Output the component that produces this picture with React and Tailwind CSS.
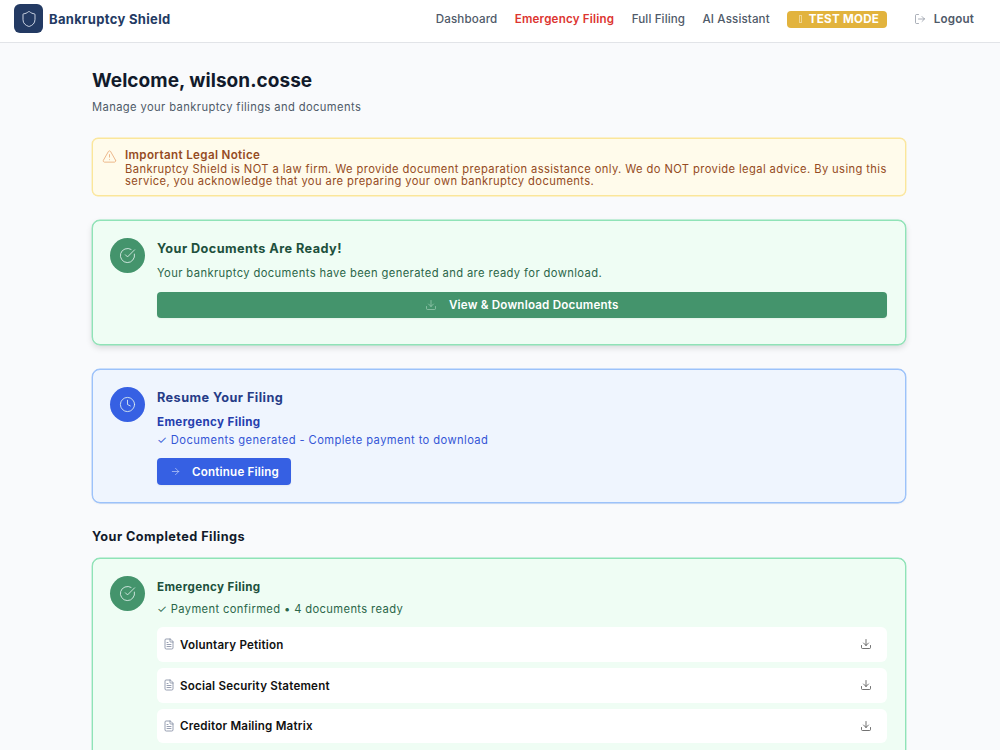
import React from 'react';
import {
  Shield,
  LogOut,
  TriangleAlert,
  CircleCheckBig,
  Clock,
  ArrowRight,
  Download,
  FileText,
} from 'lucide-react';

const navItems = [
  { label: 'Dashboard' },
  { label: 'Emergency Filing', urgent: true },
  { label: 'Full Filing' },
  { label: 'AI Assistant' },
];

const documents = [
  'Voluntary Petition',
  'Social Security Statement',
  'Creditor Mailing Matrix',
];

const Header = () => (
  <header className="h-[43px] bg-white border-b border-[#e2e4e8] flex items-start justify-between pl-[14px] pr-[26px]">
    <div className="flex items-center pt-1">
      <div className="w-[29px] h-[29px] rounded-md bg-[#233a63] flex items-center justify-center">
        <Shield className="w-[18px] h-[18px] text-[#dbe2ee]" strokeWidth={1.2} />
      </div>
      <span className="ml-1.5 text-[13px] leading-5 font-bold tracking-[0.33px] text-[#233a63]">Bankruptcy Shield</span>
    </div>

    <nav className="flex items-center h-[38px] text-[11.6px] tracking-[0.2px] text-[#4f5a69]">
      {navItems.map((item) => (
        <a
          key={item.label}
          href="#"
          className={`mr-[17.4px] whitespace-nowrap ${item.urgent ? 'font-semibold text-[#dc3530]' : 'font-medium tracking-[0.12px]'}`}
        >
          {item.label}
        </a>
      ))}
      <span className="w-[100px] h-[17px] mr-[0.5px] rounded bg-[#e2b33d] text-white font-bold tracking-[0.27px] flex items-center justify-end pr-2 whitespace-nowrap">
        <span className="w-[3px] h-2 border border-[#f0d58f] mr-[7px]" />
        TEST MODE
      </span>
      <button className="ml-[26px] flex items-center font-semibold">
        <LogOut className="w-[12px] h-[12px] mr-[8px] text-[#7c8491]" strokeWidth={1.3} />
        Logout
      </button>
    </nav>
  </header>
);

const CardIcon = ({ icon: Icon, color }) => (
  <div className={`w-[35px] h-[35px] shrink-0 rounded-full flex items-center justify-center ${color}`}>
    <Icon className="w-[17px] h-[17px] text-[#e3f1ee]" strokeWidth={1.2} />
  </div>
);

const App = () => {
  return (
    <div className="h-[750px] overflow-hidden bg-[#f9fafc] font-['Inter',sans-serif] text-[11.2px] leading-3 tracking-[0.39px]">
      <Header />

      <main className="w-[813.5px] ml-[92px] pt-[26px]">
        <h1 className="text-[19px] leading-[23px] font-bold tracking-[0.04px] text-[#121a2b]">Welcome, wilson.cosse</h1>
        <p className="mt-2 leading-[14px] text-[#4f5a69]">Manage your bankruptcy filings and documents</p>

        {/* Legal notice */}
        <div className="mt-6 h-[58px] flex border border-[#fbe69a] rounded-md bg-[#fffbeb] pt-[10px] pl-[9px] text-[#954b23] shadow-[0_0_0_0.4px_#fbe69a]">
          <TriangleAlert className="w-[15px] h-[15px] shrink-0 text-[#e6a26c]" strokeWidth={1.2} />
          <div className="ml-[8px] whitespace-nowrap">
            <h2 className="text-[11.6px] font-semibold leading-3 tracking-[0.35px]">Important Legal Notice</h2>
            <p className="mt-[2px]">
              Bankruptcy Shield is NOT a law firm. We provide document preparation assistance only. We do NOT provide legal advice. By using this
              <br />
              service, you acknowledge that you are preparing your own bankruptcy documents.
            </p>
          </div>
        </div>

        {/* Documents ready */}
        <section className="mt-6 h-[125px] flex border border-[#8fe3b7] rounded-lg bg-[#effdf4] py-[17px] pl-[17px] pr-[18px] shadow-[0_0_0_0.4px_#8fe3b7,0_3px_6px_rgba(0,0,0,0.13)]">
          <CardIcon icon={CircleCheckBig} color="bg-[#44946c]" />
          <div className="ml-[12px] flex-1">
            <h2 className="mt-[3px] text-[12.7px] leading-4 font-bold tracking-[0.44px] text-[#20503c]">Your Documents Are Ready!</h2>
            <p className="mt-[9px] leading-[14px] text-[#2b6649]">Your bankruptcy documents have been generated and are ready for download.</p>
            <button className="mt-3 w-full h-[26px] rounded bg-[#44946c] text-white text-[11.6px] font-semibold tracking-[0.2px] flex items-center justify-center shadow-xs">
              <Download className="w-[12px] h-[12px] mr-3 text-[#a9d3bd]" strokeWidth={1.3} />
              View &amp; Download Documents
            </button>
          </div>
        </section>

        {/* Resume filing */}
        <section className="mt-[24px] h-[134px] flex border border-[#9cc2fa] rounded-lg bg-[#eff5fe] py-[17px] pl-[17px] pr-[18px] shadow-[0_0_0_0.4px_#9cc2fa,0_1px_2px_rgba(0,0,0,0.06)]">
          <CardIcon icon={Clock} color="bg-[#3660e3]" />
          <div className="ml-[12px] flex-1">
            <h2 className="mt-[3px] text-[12.7px] leading-4 font-bold tracking-[0.44px] text-[#263c87]">Resume Your Filing</h2>
            <h3 className="mt-[9px] text-[11.6px] leading-[14px] font-bold tracking-[0.37px] text-[#263fae]">Emergency Filing</h3>
            <p className="mt-1 leading-[14px] tracking-[0.41px] text-[#3455d6]">✓ Documents generated - Complete payment to download</p>
            <button className="mt-[11px] w-[134px] h-[27px] rounded bg-[#3660e3] text-white text-[11.6px] font-semibold tracking-[0.2px] flex items-center pl-[13px] shadow-xs">
              <ArrowRight className="w-[11px] h-[11px] mr-[11px] text-[#c3d0f8]" strokeWidth={1.5} />
              Continue Filing
            </button>
          </div>
        </section>

        <h2 className="mt-[26px] text-[12.7px] leading-4 font-bold tracking-[0.44px] text-[#121a2b]">Your Completed Filings</h2>

        <section className="mt-[13px] flex border border-[#8fe3b7] rounded-lg bg-[#effdf4] pt-[17px] pl-[17px] pr-[18px] pb-[18px] shadow-[0_0_0_0.4px_#8fe3b7]">
          <CardIcon icon={CircleCheckBig} color="bg-[#44946c]" />
          <div className="ml-[12px] flex-1">
            <h3 className="mt-1 text-[11.6px] leading-[14px] font-bold tracking-[0.37px] text-[#20503c]">Emergency Filing</h3>
            <p className="mt-2 leading-[14px] tracking-[0.37px] text-[#2b6649]">✓ Payment confirmed • 4 documents ready</p>
            <ul className="mt-[11px] space-y-[6px]">
              {documents.map((doc) => (
                <li key={doc} className="h-[34.8px] rounded-md bg-white flex items-center pl-[6px] pr-[15px]">
                  <FileText className="w-[12px] h-[12px] text-[#77809a]" strokeWidth={1.5} />
                  <span className="ml-[5px] flex-1 pt-px text-[11.6px] font-semibold tracking-[0.2px] text-[#111111]">{doc}</span>
                  <Download className="w-[12px] h-[12px] text-[#444444]" strokeWidth={1.5} />
                </li>
              ))}
            </ul>
          </div>
        </section>
      </main>
    </div>
  );
};

export default App;
